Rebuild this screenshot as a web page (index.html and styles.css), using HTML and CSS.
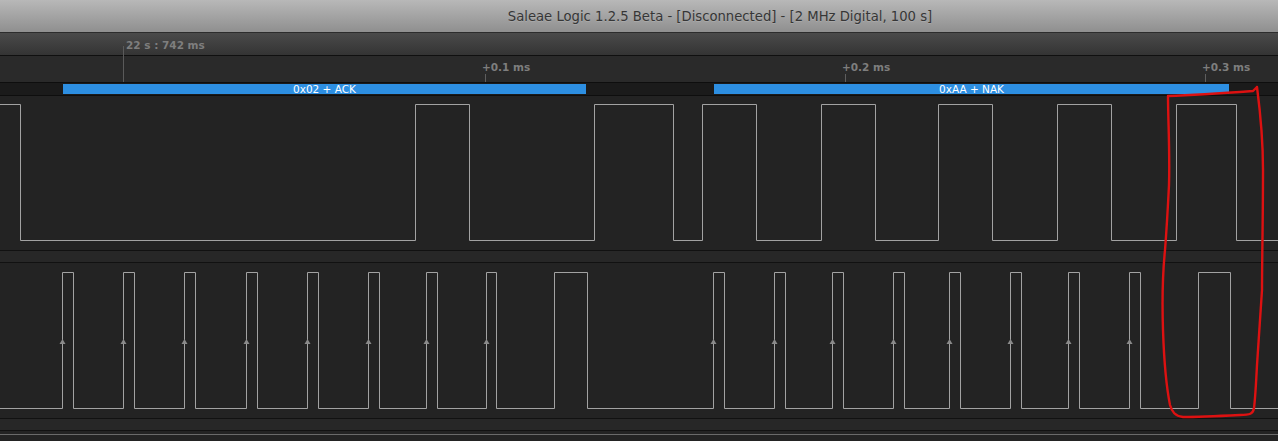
FILE: index.html
```html
<!DOCTYPE html>
<html>
<head>
<meta charset="utf-8">
<link rel="stylesheet" href="styles.css">
</head>
<body>
<div class="app">
  <div class="titlebar"><span class="title">Saleae Logic 1.2.5 Beta - [Disconnected] - [2 MHz Digital, 100 s]</span></div>
  <div class="timebar"><span class="abs-time">22 s : 742 ms</span></div>
  <div class="ruler">
    <span class="rlabel" style="left:482px">+0.1 ms</span>
    <span class="rlabel" style="left:842px">+0.2 ms</span>
    <span class="rlabel" style="left:1202px">+0.3 ms</span>
    <span class="tick" style="left:485px"></span>
    <span class="tick" style="left:845px"></span>
    <span class="tick" style="left:1205px"></span>
  </div>
  <div class="protocol">
    <div class="frame" style="left:63px;width:523px">0x02 + ACK</div>
    <div class="frame" style="left:714px;width:515px">0xAA + NAK</div>
  </div>
  <div class="channel ch0">
    <svg class="wave" width="1278" height="154" viewBox="0 0 1278 154">
      <path d="M0 8.5H20.5V144.5H415.5V8.5H469.5V144.5H594.5V8.5H673.5V144.5H702.5V8.5H756.5V144.5H821.5V8.5H875.5V144.5H938.5V8.5H992.5V144.5H1057.5V8.5H1111.5V144.5H1176.5V8.5H1236.5V144.5H1278"/>
    </svg>
  </div>
  <div class="sep"></div>
  <div class="channel ch1">
    <svg class="wave" width="1278" height="155" viewBox="0 0 1278 155">
      <path d="M0 145.5H62.5V9.5H73.5V145.5H123.5V9.5H134.5V145.5H184.5V9.5H195.5V145.5H246.5V9.5H257.5V145.5H307.5V9.5H318.5V145.5H368.5V9.5H379.5V145.5H426.5V9.5H437.5V145.5H486.5V9.5H496.5V145.5H554.5V9.5H587.5V145.5H713.5V9.5H724.5V145.5H774.5V9.5H785.5V145.5H832.5V9.5H843.5V145.5H893.5V9.5H904.5V145.5H949.5V9.5H960.5V145.5H1010.5V9.5H1021.5V145.5H1068.5V9.5H1079.5V145.5H1129.5V9.5H1140.5V145.5H1198.5V9.5H1230.5V145.5H1278"/>
      <g class="arrows">
        <polygon points="62.5,76 59.5,81 65.5,81"/>
        <polygon points="123.5,76 120.5,81 126.5,81"/>
        <polygon points="184.5,76 181.5,81 187.5,81"/>
        <polygon points="246.5,76 243.5,81 249.5,81"/>
        <polygon points="307.5,76 304.5,81 310.5,81"/>
        <polygon points="368.5,76 365.5,81 371.5,81"/>
        <polygon points="426.5,76 423.5,81 429.5,81"/>
        <polygon points="486.5,76 483.5,81 489.5,81"/>
        <polygon points="713.5,76 710.5,81 716.5,81"/>
        <polygon points="774.5,76 771.5,81 777.5,81"/>
        <polygon points="832.5,76 829.5,81 835.5,81"/>
        <polygon points="893.5,76 890.5,81 896.5,81"/>
        <polygon points="949.5,76 946.5,81 952.5,81"/>
        <polygon points="1010.5,76 1007.5,81 1013.5,81"/>
        <polygon points="1068.5,76 1065.5,81 1071.5,81"/>
        <polygon points="1129.5,76 1126.5,81 1132.5,81"/>
      </g>
    </svg>
  </div>
  <div class="sep"></div>
  <div class="footer"></div>
  <div class="marker"></div>
  <svg class="annotation" width="1278" height="441" viewBox="0 0 1278 441">
    <path d="M1168 96 C1195 95 1225 93 1253 91 L1257 87 M1257 87 C1260 110 1263 140 1263 170 C1263 220 1262 260 1262 290 C1260 320 1258 350 1257 365 C1256 385 1255 400 1254 408 C1253 414 1250 415 1240 415 C1220 416 1200 417 1183 417 C1175 416 1172 412 1170 405 C1166 385 1164 360 1163 330 C1162 300 1163 270 1165 250 C1167 225 1168 205 1169 185 C1170 150 1168 120 1168 96"/>
  </svg>
</div>
</body>
</html>
```

FILE: styles.css
```css
* { box-sizing: border-box; }
html, body { margin: 0; padding: 0; }
body {
  background: #232323;
  width: 1278px;
  height: 441px;
  overflow: hidden;
  font-family: "DejaVu Sans", "Liberation Sans", sans-serif;
}
.app {
  position: relative;
  width: 1278px;
  height: 441px;
  display: flex;
  flex-direction: column;
}
.titlebar {
  height: 33px;
  flex: none;
  background: linear-gradient(#b8b8b8, #8f8f8f);
  border-bottom: 1px solid #2c2c2c;
  display: flex;
  align-items: center;
  justify-content: center;
  padding-left: 162px;
}
.title {
  font-size: 13.2px;
  color: #363636;
  text-shadow: 0 1px 0 rgba(255,255,255,0.15);
  white-space: nowrap;
}
.timebar {
  height: 23px;
  flex: none;
  background: linear-gradient(#4a4a4a, #343434);
  border-bottom: 1px solid #101010;
  display: flex;
  align-items: center;
  padding-left: 126px;
  padding-top: 1px;
}
.abs-time, .rlabel {
  font-size: 10.5px;
  font-weight: bold;
  color: #7e7e7e;
  white-space: nowrap;
}
.ruler {
  position: relative;
  height: 27px;
  flex: none;
  background: #2a2a2a;
  border-bottom: 1px solid #0e0e0e;
}
.rlabel {
  position: absolute;
  top: 5px;
}
.tick {
  position: absolute;
  top: 18px;
  width: 1px;
  height: 8px;
  background: #5e5e5e;
}
.protocol {
  position: relative;
  height: 13px;
  flex: none;
  background: #1b1b1b;
  border-bottom: 1px solid #0e0e0e;
}
.frame {
  position: absolute;
  top: 1px;
  height: 10px;
  background: #2d8fe2;
  color: #fff;
  font-size: 10.5px;
  line-height: 10px;
  text-align: center;
  white-space: nowrap;
}
.channel {
  flex: none;
  background: #232323;
  border-bottom: 1px solid #111;
}
.ch0 { height: 155px; }
.ch1 { height: 156px; }
.wave { display: block; }
.wave path {
  fill: none;
  stroke: #a2a2a2;
  stroke-width: 1;
}
.arrows polygon { fill: #8a8a8a; }
.sep {
  height: 12px;
  flex: none;
  background: #272727;
  border-bottom: 1px solid #111;
}
.footer {
  flex: 1;
  background: #232323;
  border-top: 3px solid #232323;
  position: relative;
}
.footer::before {
  content: "";
  display: block;
  height: 1px;
  background: #6a6a6a;
}
.marker {
  position: absolute;
  left: 123px;
  top: 46px;
  width: 1px;
  height: 36px;
  background: #5a5a5a;
}
.annotation {
  position: absolute;
  left: 0;
  top: 0;
  pointer-events: none;
}
.annotation path {
  fill: none;
  stroke: #dd1111;
  stroke-width: 2.4;
  stroke-linecap: round;
  stroke-linejoin: round;
}
```
